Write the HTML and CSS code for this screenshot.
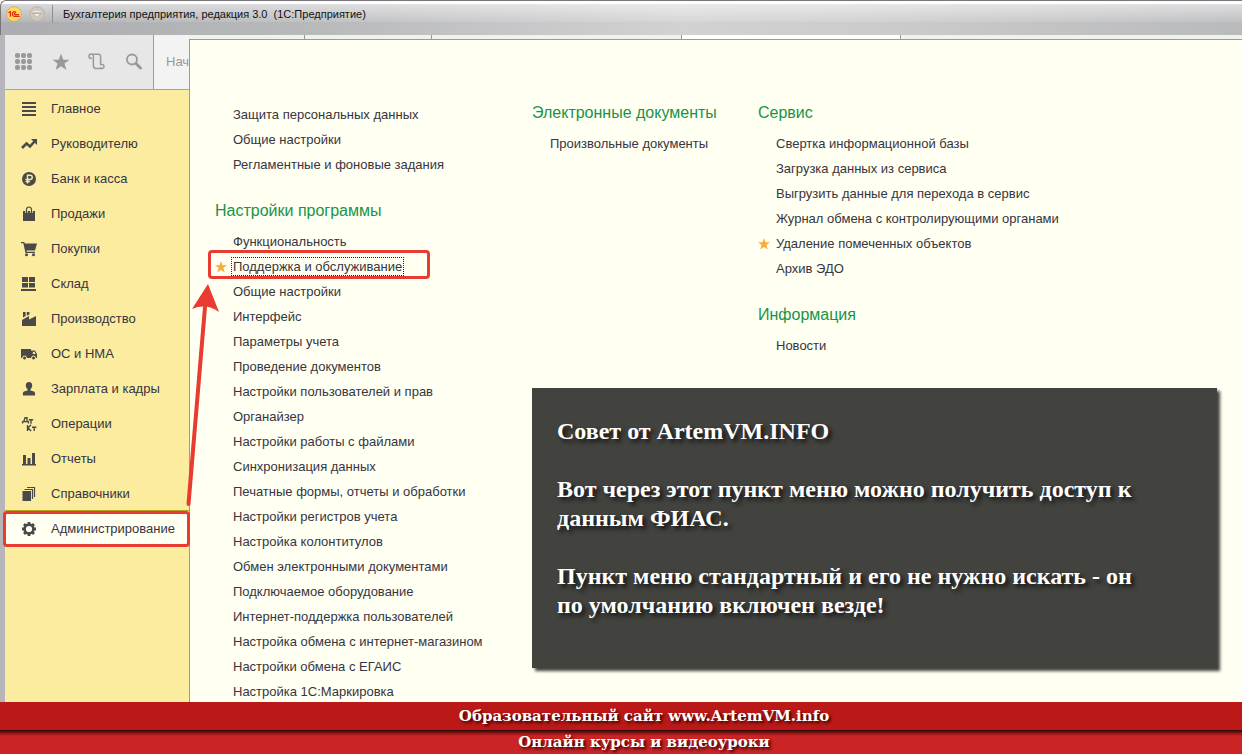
FILE: index.html
```html
<!DOCTYPE html>
<html lang="ru">
<head>
<meta charset="utf-8">
<title>Бухгалтерия предприятия, редакция 3.0</title>
<link rel="stylesheet" href="styles.css">
</head>
<body>
<div class="window">
  <header class="titlebar">
    <svg class="logo" viewBox="0 0 16 16" aria-hidden="true"><circle cx="8" cy="8" r="7.300" fill="#ffe04f" stroke="#dba878"/><path d="M2.400 6.800 4.400 5.600V10.800M9.800 6.600C8.600 5 6.400 5.800 6.400 8s1.600 2.500 2.800 2.300H13.600M9.400 7.600c-.9-.4-1.400.8-.3 1h4" fill="none" stroke="#e32418" stroke-width="1.300"/></svg>
    <button class="sysmenu" aria-label="Меню"><svg viewBox="0 0 16 16"><circle cx="8" cy="8" r="7.300" fill="#d0c7be" stroke="#bfb1a5"/><path d="M4 5.500h8" stroke="#eee9e2"/><path d="M4 7.500h8L8 11.500z" fill="#f0ece6" stroke="#a9a097" stroke-width=".7"/></svg></button>
    <span class="divider"></span>
    <h1 class="title">Бухгалтерия предприятия, редакция 3.0&nbsp; (1С:Предприятие)</h1>
  </header>

  <div class="workspace">
    <aside class="sidebar">
      <div class="toolbar">
        <div class="tools">
          <button class="tool" aria-label="Все функции"><svg viewBox="0 0 18 18"><g fill="#999"><rect width="5" height="5" rx="2"/><rect x="6" width="5" height="5" rx="2"/><rect x="12" width="5" height="5" rx="2"/><rect y="6" width="5" height="5" rx="2"/><rect x="6" y="6" width="5" height="5" rx="2"/><rect x="12" y="6" width="5" height="5" rx="2"/><rect y="12" width="5" height="5" rx="2"/><rect x="6" y="12" width="5" height="5" rx="2"/><rect x="12" y="12" width="5" height="5" rx="2"/></g></svg></button>
          <button class="tool" aria-label="Избранное"><svg viewBox="0 0 18 18"><path d="M9 .5 11.200 6.700h6.300l-5 3.900 1.900 6.400L9 13.200 3.600 17l1.900-6.400-5-3.900h6.300z" fill="#999"/></svg></button>
          <button class="tool" aria-label="История"><svg viewBox="0 0 18 18"><path d="M4 5.500H3.200A2.200 2.200 0 1 1 5.400 3.300V12.500c0 2 1 2.900 2.600 2.900h7M3.200 1.200h7.200c1.400 0 2.200.8 2.200 2.200v8.200h1.600a1.900 1.900 0 1 1-1.800 2.600" fill="none" stroke="#999" stroke-width="1.500"/></svg></button>
          <button class="tool" aria-label="Поиск"><svg viewBox="0 0 18 18"><circle cx="7" cy="6.500" r="5" fill="none" stroke="#999" stroke-width="1.800"/><path d="m11 10.500 4.500 4.500" stroke="#999" stroke-width="3" stroke-linecap="round"/></svg></button>
        </div>
        <div class="home-tab">Нач</div>
      </div>
      <nav class="nav">
        <a class="nav-item" href="#"><svg viewBox="0 0 16 16"><path d="M1 1h14v2H1zM1 5h14v2H1zM1 9h14v2H1zM1 13h14v2H1z"/></svg>Главное</a>
        <a class="nav-item" href="#"><svg viewBox="0 0 16 16"><path d="m1 12 4.500-4.500 3.500 3 4.500-5" fill="none" stroke="#4a4a4a" stroke-width="2.600"/><path d="M10 3h6v6z"/></svg>Руководителю</a>
        <a class="nav-item" href="#"><svg viewBox="0 0 16 16"><circle cx="8" cy="8" r="7"/><path d="M6.500 12.500V4.200h2.600a2.100 2.100 0 0 1 0 4.300H4.500M4.500 10.500H9" fill="none" stroke="#fbec9f" stroke-width="1.400"/></svg>Банк и касса</a>
        <a class="nav-item" href="#"><svg viewBox="0 0 16 16"><path d="M2 5h12v10H2z"/><path d="M5.500 7V3.500a2.500 2.500 0 0 1 5 0V7" fill="none" stroke="#fbec9f" stroke-width="2.600"/><path d="M5.500 7V3.500a2.500 2.500 0 0 1 5 0V7" fill="none" stroke="#4a4a4a" stroke-width="1.200"/></svg>Продажи</a>
        <a class="nav-item" href="#"><svg viewBox="0 0 16 16"><path d="M0 1h3.200l.6 1.500H16L14 9.500H5.500l.3 1.300H14V12H4.500L2.300 2.200H0z"/><circle cx="5.500" cy="13.700" r="1.500"/><circle cx="12.500" cy="13.700" r="1.500"/></svg>Покупки</a>
        <a class="nav-item" href="#"><svg viewBox="0 0 16 16"><path d="M1 1h6v5H1zM8 1h6v5H8zM1 7h6v4.500H1zM8 7h6v4.500H8zM0 13h15v2H0z"/></svg>Склад</a>
        <a class="nav-item" href="#"><svg viewBox="0 0 16 16"><path d="M1 15V9l7-4v3.500L15 5v10zM2 1h2.600v4L2 6.500zM5.800 1h2.600v2.500L5.800 4.800z"/></svg>Производство</a>
        <a class="nav-item" href="#"><svg viewBox="0 0 16 16"><path fill-rule="evenodd" d="M0 3h10v9H0zM10 4.500H14l2 3.500v4h-6zM11.800 5.700V8h3l-1.400-2.300z"/><circle cx="3.500" cy="12" r="2" stroke="#fbec9f"/><circle cx="12.500" cy="12" r="2" stroke="#fbec9f"/></svg>ОС и НМА</a>
        <a class="nav-item" href="#"><svg viewBox="0 0 16 16"><path d="M8 1c2.200 0 3.200 1.500 3.200 3.500S10 8.500 8 8.500 4.800 6.500 4.800 4.500 5.800 1 8 1zM6.500 8h3v1.500l3.500 1c1 .4 1.300 1.500 1 4H2c-.3-2.500 0-3.600 1-4l3.500-1z"/></svg>Зарплата и кадры</a>
        <a class="nav-item" href="#"><svg viewBox="0 0 16 16"><path d="M1.600 7.500V5.600h5.800v1.900M2.800 5.500 4 1.700h2v4M7.800 3.700h4.400M10 3.700v4M6.500 9v6M10 8.800 7 12l3.200 3M11 11.300h4.400M13.200 11.300V15" fill="none" stroke="#4a4a4a" stroke-width="1.400"/></svg>Операции</a>
        <a class="nav-item" href="#"><svg viewBox="0 0 16 16"><path d="M1 13h14v1.500H1zM2 4h3v9H2zM6.500 7h3v6h-3zM11 2h3v11h-3z"/></svg>Отчеты</a>
        <a class="nav-item" href="#"><svg viewBox="0 0 16 16"><path d="M1.500 5H10v10H1.500z"/><path d="M3.500 3.500h8V13M6 1.500h7.500V11" fill="none" stroke="#4a4a4a" stroke-width="1.200"/></svg>Справочники</a>
        <a class="nav-item current" href="#"><svg viewBox="0 0 16 16"><circle cx="8" cy="8" r="4.400" fill="none" stroke="#4a4a4a" stroke-width="2.600"/><path d="M8 1v2.500M8 12.500V15M1 8h2.500M12.500 8H15M3 3l2 2M11 11l2 2M13 3l-2 2M5 11l-2 2" stroke="#4a4a4a" stroke-width="2.800"/></svg>Администрирование</a>
      </nav>
    </aside>

    <main class="main">
      <div class="tabs"><span class="tab home"></span><span class="tab second"></span><span class="tab third"></span><span class="tab open"></span></div>
      <div class="panel">
        <div class="settings">
          <ul class="links lead">
            <li><a href="#">Защита персональных данных</a></li>
            <li><a href="#">Общие настройки</a></li>
            <li><a href="#">Регламентные и фоновые задания</a></li>
          </ul>
          <h2>Настройки программы</h2>
          <ul class="links">
            <li><a href="#">Функциональность</a></li>
            <li class="marked"><svg class="star" viewBox="0 0 12 12"><path d="m6 0 1.500 4.300H12L8.400 7.100 9.700 11.500 6 8.900 2.300 11.500l1.300-4.400L0 4.300h4.500z"/></svg><a class="focused" href="#">Поддержка и обслуживание</a></li>
            <li><a href="#">Общие настройки</a></li>
            <li><a href="#">Интерфейс</a></li>
            <li><a href="#">Параметры учета</a></li>
            <li><a href="#">Проведение документов</a></li>
            <li><a href="#">Настройки пользователей и прав</a></li>
            <li><a href="#">Органайзер</a></li>
            <li><a href="#">Настройки работы с файлами</a></li>
            <li><a href="#">Синхронизация данных</a></li>
            <li><a href="#">Печатные формы, отчеты и обработки</a></li>
            <li><a href="#">Настройки регистров учета</a></li>
            <li><a href="#">Настройка колонтитулов</a></li>
            <li><a href="#">Обмен электронными документами</a></li>
            <li><a href="#">Подключаемое оборудование</a></li>
            <li><a href="#">Интернет-поддержка пользователей</a></li>
            <li><a href="#">Настройка обмена с интернет-магазином</a></li>
            <li><a href="#">Настройки обмена с ЕГАИС</a></li>
            <li><a href="#">Настройка 1С:Маркировка</a></li>
          </ul>
        </div>
        <div class="rest">
          <div class="groups">
            <div class="documents">
              <h2>Электронные документы</h2>
              <ul class="links"><li><a href="#">Произвольные документы</a></li></ul>
            </div>
            <div class="service">
              <h2>Сервис</h2>
              <ul class="links">
                <li><a href="#">Свертка информационной базы</a></li>
                <li><a href="#">Загрузка данных из сервиса</a></li>
                <li><a href="#">Выгрузить данные для перехода в сервис</a></li>
                <li><a href="#">Журнал обмена с контролирующими органами</a></li>
                <li><svg class="star" viewBox="0 0 12 12"><path d="m6 0 1.500 4.300H12L8.400 7.100 9.700 11.500 6 8.900 2.300 11.500l1.300-4.400L0 4.300h4.500z"/></svg><a href="#">Удаление помеченных объектов</a></li>
                <li><a href="#">Архив ЭДО</a></li>
              </ul>
              <h2>Информация</h2>
              <ul class="links"><li><a href="#">Новости</a></li></ul>
            </div>
          </div>
          <section class="tip">
            <p>Совет от ArtemVM.INFO</p>
            <p>Вот через этот пункт меню можно получить доступ к<br>данным ФИАС.</p>
            <p>Пункт меню стандартный и его не нужно искать - он<br>по умолчанию включен везде!</p>
          </section>
        </div>
      </div>
    </main>
  </div>
  <svg class="arrow" viewBox="0 0 36 224" aria-hidden="true"><path d="M2.500 221 19 24" stroke="#e83b31" stroke-width="4" stroke-linecap="round"/><path d="M22 1 33 29Q20 20 6 26z" fill="#e83b31"/></svg>
</div>
<footer class="banner">
  <p class="site">Образовательный сайт www.ArtemVM.info</p>
  <p class="courses">Онлайн курсы и видеоуроки</p>
</footer>
</body>
</html>
```
FILE: styles.css
```css
*, *::after { box-sizing: border-box; }
body {
  margin: 0;
  min-height: 100vh;
  display: flex;
  flex-direction: column;
  font: 13px/21px "Liberation Sans", Arial, sans-serif;
  color: #373540;
  background: #fffff2;
}
h1, h2, p, ul { margin: 0; padding: 0; }
h2 { font-weight: normal; }
ul { list-style: none; }
a { color: inherit; text-decoration: none; }
button { padding: 0; border: 0; background: none; display: flex; }
svg { display: block; flex: none; }

.window {
  position: relative;
  flex: 1;
  display: flex;
  flex-direction: column;
}
.titlebar {
  height: 35px;
  padding: 0 5px 9px;
  display: flex;
  align-items: center;
  gap: 7px;
  border-top: 1px solid #77747a;
  border-left: 1px solid #77747a;
  border-top-left-radius: 6px;
  background:
    linear-gradient(to bottom, #fff 0 3px, transparent 3px),
    linear-gradient(to bottom, rgba(255,255,255,.6), rgba(255,255,255,.1) 21px, transparent 21px),
    linear-gradient(to right, #acadb0, #b8b9bb 25%, #d2d2d3 55%, #ccc 70%, #b9babc);
}
.titlebar svg { width: 16px; height: 16px; }
.divider { width: 1px; height: 18px; background: #8f8f94; }
.title {
  font: 11px/16px "Liberation Sans", Arial, sans-serif;
  color: #111;
  padding-left: 3px;
}

.workspace { flex: 1; display: flex; border-left: 5px solid #b5b5ba; }
.sidebar { width: 184px; flex: none; display: flex; flex-direction: column; }
.toolbar { height: 55px; display: flex; background: #e7e7e8; border-bottom: 1px solid #a9a490; }
.tools {
  width: 149px;
  flex: none;
  padding: 0 10px;
  display: flex;
  align-items: center;
  justify-content: space-between;
  border-right: 1px solid #9c9c9c;
}
.tool svg { width: 18px; height: 18px; }
.home-tab {
  flex: 1;
  padding-left: 12px;
  line-height: 54px;
  color: #99979d;
  background: #f3f3f3;
}
.nav { flex: 1; padding-top: 1px; background: #fbec9f; }
.nav-item {
  height: 35px;
  padding-left: 16px;
  display: flex;
  align-items: center;
  gap: 14px;
}
.nav-item svg { width: 16px; height: 16px; fill: #4a4a4a; }
.current { position: relative; background: #fffff2; box-shadow: 0 -1px #b9a31c; }
.current::after {
  content: "";
  position: absolute;
  inset: 0 -1px -1px -2px;
  border: 3px solid #e83b31;
  border-radius: 4px;
  z-index: 2;
}

.main { flex: 1; min-width: 0; display: flex; flex-direction: column; }
.tabs { height: 4px; display: flex; background: #f1f1ee; }
.tab { border-right: 1px solid #999; }
.home { width: 116px; }
.second { width: 127px; }
.third { width: 250px; }
.open { width: 219px; background: #fff; }
.panel {
  flex: 1;
  display: flex;
  padding: 62px 25px 0 25px;
  border-top: 1px solid #b9a31c;
  border-left: 1px solid #b9a31c;
  background: #fffff2;
}
.settings { width: 317px; flex: none; }
.lead { padding-top: 2px; }
.rest { flex: 1; min-width: 0; }
.groups { display: flex; }
.documents { width: 226px; flex: none; }
h2 { font-size: 16px; line-height: 21px; color: #179448; }
.links { display: flex; flex-direction: column; gap: 4px; }
.links li {
  position: relative;
  height: 21px;
  display: flex;
  align-items: center;
  padding-left: 18px;
}
h2 + .links { margin-top: 10px; }
.links + h2 { margin-top: 25px; }
.star { width: 12px; height: 12px; margin-left: -18px; margin-right: 6px; fill: #fbad3c; }
.focused { line-height: 15px; outline: 1px dotted #222; outline-offset: 1px; }
.marked::after {
  content: "";
  position: absolute;
  top: -6px;
  bottom: -2px;
  left: -7px;
  width: 222px;
  border: 3px solid #e83b31;
  border-radius: 4px;
}
.tip {
  margin-top: 32px;
  padding: 29px 25px 48px;
  display: flex;
  flex-direction: column;
  gap: 29px;
  font: bold 24px/29px "Liberation Serif", "Times New Roman", serif;
  color: #fff;
  text-shadow: 3px 3px 4px #111;
  background: #42423f;
  box-shadow: 3px 3px 3px #42423f;
}
.arrow { position: absolute; left: 186px; top: 283px; width: 36px; height: 224px; }

.banner {
  font: bold 15px/24px "DejaVu Serif", serif;
  text-align: center;
  color: #fff;
  text-shadow: 2px 2px 3px #300;
}
.banner p { padding-left: 46px; }
.site { padding-top: 2px; padding-bottom: 2px; background: #bb1917; }
.courses { background: linear-gradient(to bottom, #220505, #8a1515 3px, #cb2424 6px); }
```
